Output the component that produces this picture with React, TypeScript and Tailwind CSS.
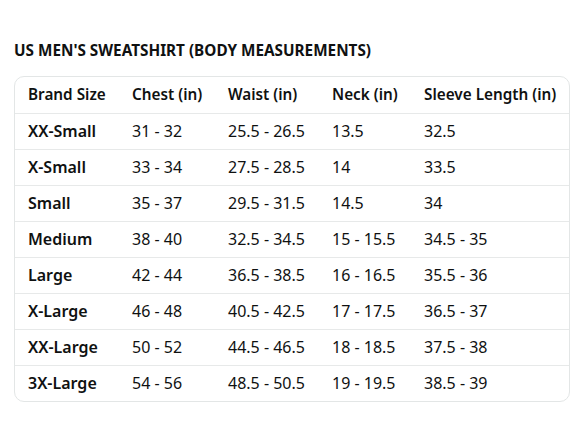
import React from 'react';

const headers = ['Brand Size', 'Chest (in)', 'Waist (in)', 'Neck (in)', 'Sleeve Length (in)'];

const rows = [
  ['XX-Small', '31 - 32', '25.5 - 26.5', '13.5', '32.5'],
  ['X-Small', '33 - 34', '27.5 - 28.5', '14', '33.5'],
  ['Small', '35 - 37', '29.5 - 31.5', '14.5', '34'],
  ['Medium', '38 - 40', '32.5 - 34.5', '15 - 15.5', '34.5 - 35'],
  ['Large', '42 - 44', '36.5 - 38.5', '16 - 16.5', '35.5 - 36'],
  ['X-Large', '46 - 48', '40.5 - 42.5', '17 - 17.5', '36.5 - 37'],
  ['XX-Large', '50 - 52', '44.5 - 46.5', '18 - 18.5', '37.5 - 38'],
  ['3X-Large', '54 - 56', '48.5 - 50.5', '19 - 19.5', '38.5 - 39'],
];

const cols = 'grid grid-cols-[104px_96px_104px_92px_1fr] items-center h-[36px]';

const App = () => {
  return (
    <div className="w-[588px] h-[441px] bg-white text-[#0f1111] font-['Noto_Sans',sans-serif]">
      <div className="pt-[40px] px-[14px]">
        <h2 className="text-[15.3px] font-bold leading-[20px]">
          US MEN'S SWEATSHIRT (BODY MEASUREMENTS)
        </h2>

        <div className="mt-[16px] w-[556px] border border-[#e3e6e6] rounded-[10px] overflow-hidden">
          <div className={`${cols} font-semibold text-[15.3px] pb-[2px]`}>
            {headers.map((h) => (
              <div key={h} className="pl-[13px] whitespace-nowrap">{h}</div>
            ))}
          </div>
          {rows.map((r) => (
            <div key={r[0]} className={`${cols} border-t border-[#e7e9e9] text-[16px] pb-[1px]`}>
              {r.map((c, i) => (
                <div key={i} className={`pl-[13px] whitespace-nowrap ${i === 0 ? 'font-semibold' : ''}`}>
                  {c}
                </div>
              ))}
            </div>
          ))}
        </div>
      </div>
    </div>
  );
};

export default App;
